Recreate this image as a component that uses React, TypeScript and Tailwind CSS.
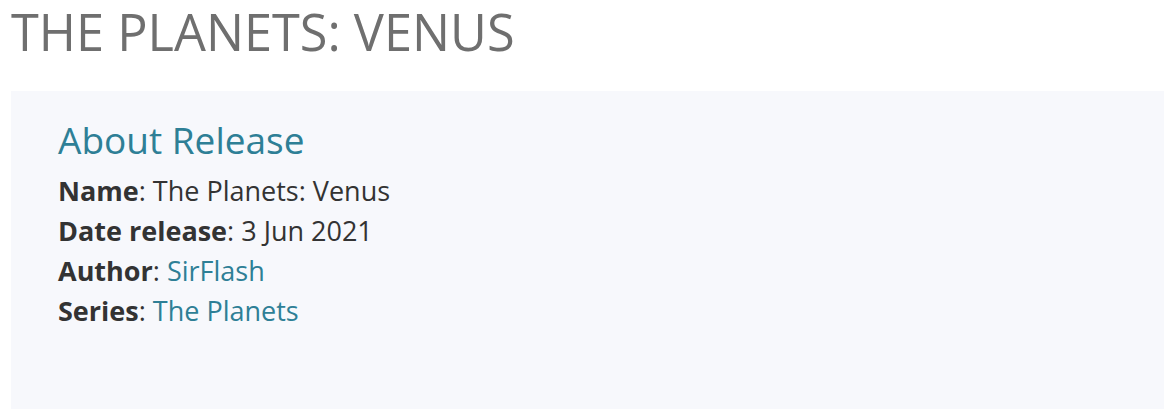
import React from "react";

const rows: { label: string; value: string; link?: boolean }[] = [
  { label: "Name", value: "The Planets: Venus" },
  { label: "Date release", value: "3 Jun 2021" },
  { label: "Author", value: "SirFlash", link: true },
  { label: "Series", value: "The Planets", link: true },
];

export default function App() {
  return (
    <div className="min-h-[409px] bg-white pl-[11px] font-['Open_Sans',sans-serif]">
      <h1 className="text-[50.5px] leading-[64px] font-normal text-[#6f6f6f]">
        THE PLANETS: VENUS
      </h1>
      <div className="mt-[27px] min-h-[318px] bg-[#f7f8fc] pl-[47px] pt-[24px]">
        <h2 className="text-[37px] leading-[50px] font-normal text-[#2e7f96]">
          About Release
        </h2>
        <div className="mt-[6px] text-[27px] leading-[40px] text-[#333333]">
          {rows.map((r) => (
            <div key={r.label}>
              <span className="font-bold">{r.label}</span>:{" "}
              {r.link ? (
                <a href="#" className="text-[#2e7f96]">
                  {r.value}
                </a>
              ) : (
                r.value
              )}
            </div>
          ))}
        </div>
      </div>
    </div>
  );
}
